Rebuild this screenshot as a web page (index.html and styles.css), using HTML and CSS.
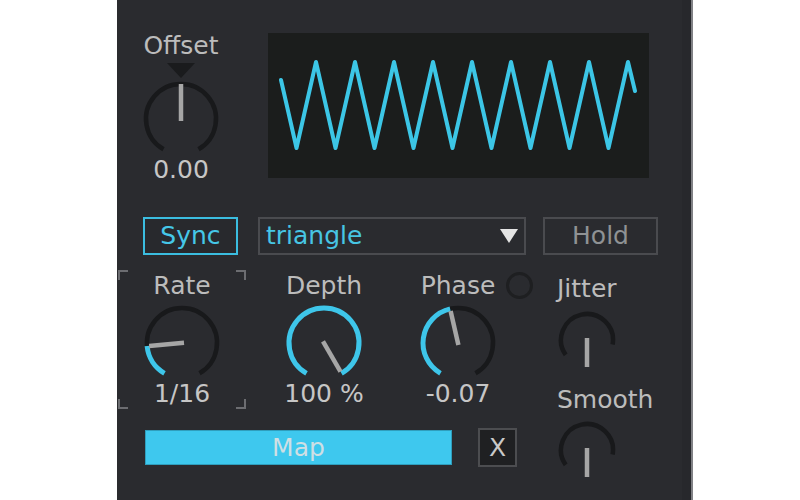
FILE: index.html
```html
<!DOCTYPE html>
<html>
<head>
<meta charset="utf-8">
<link rel="stylesheet" href="styles.css">
</head>
<body>
<div class="device">
  <div class="top">
    <div class="offset">
      <div class="label">Offset</div>
      <svg class="offset-knob" width="80" height="94" viewBox="0 0 80 94">
        <path class="track" d="M22.5 88.31 A35 35 0 1 1 57.5 88.31"/>
        <polygon class="marker" points="26,2 54,2 40,17"/>
        <line class="needle" x1="40" y1="60" x2="40" y2="23"/>
      </svg>
      <div class="value">0.00</div>
    </div>
    <div class="scope">
      <svg width="381" height="145" viewBox="0 0 381 145">
        <polyline class="wave" points="13,47 28.5,115 48,29 67.5,115 87,29 106.5,115 126,29 145.5,115 165,29 184.5,115 204,29 223.5,115 243,29 262.5,115 282,29 301.5,115 321,29 340.5,115 360,29 367,58"/>
      </svg>
    </div>
  </div>

  <div class="controls">
    <div class="btn sync">Sync</div>
    <div class="select">
      <span class="select-text">triangle</span>
      <svg class="arrow" width="18" height="14" viewBox="0 0 18 14"><polygon points="0,0 18,0 9,14"/></svg>
    </div>
    <div class="btn hold">Hold</div>
  </div>

  <div class="bottom">
    <div class="left">
      <div class="knobs">
        <div class="dial rate">
          <div class="label">Rate</div>
          <svg class="knob" width="80" height="80" viewBox="0 0 80 80">
            <path class="track" d="M22.5 70.31 A35 35 0 1 1 57.5 70.31"/>
            <path class="fill" d="M22.5 70.31 A35 35 0 0 1 5.13 43.05"/>
            <line class="needle" x1="42" y1="39.8" x2="7.1" y2="42.9"/>
          </svg>
          <div class="value">1/16</div>
        </div>
        <div class="dial depth">
          <div class="label">Depth</div>
          <svg class="knob" width="80" height="80" viewBox="0 0 80 80">
            <path class="fill" d="M22.5 70.31 A35 35 0 1 1 57.5 70.31"/>
            <line class="needle" x1="39" y1="38.3" x2="56.5" y2="68.6"/>
          </svg>
          <div class="value">100 %</div>
        </div>
        <div class="dial phase">
          <div class="label">Phase</div>
          <span class="led"></span>
          <svg class="knob" width="80" height="80" viewBox="0 0 80 80">
            <path class="track" d="M22.5 70.31 A35 35 0 1 1 57.5 70.31"/>
            <path class="fill" d="M22.5 70.31 A35 35 0 0 1 32.13 5.9"/>
            <line class="needle" x1="40.4" y1="42" x2="32.6" y2="7.9"/>
          </svg>
          <div class="value">-0.07</div>
        </div>
      </div>
      <div class="maprow">
        <div class="map">Map</div>
        <div class="xbtn">X</div>
      </div>
    </div>
    <div class="right">
      <div class="label">Jitter</div>
      <svg class="small-knob" width="60" height="60" viewBox="0 0 60 60">
        <path class="track" d="M8.7 44.9 A26 26 0 1 1 55.6 34.5"/>
        <line class="needle" x1="30" y1="28" x2="30" y2="57"/>
      </svg>
      <div class="label smooth-label">Smooth</div>
      <svg class="small-knob smooth-knob" width="60" height="60" viewBox="0 0 60 60">
        <path class="track" d="M8.7 44.9 A26 26 0 1 1 55.6 34.5"/>
        <line class="needle" x1="30" y1="28" x2="30" y2="57"/>
      </svg>
    </div>
  </div>
</div>
</body>
</html>
```

FILE: styles.css
```css
html, body {
  margin: 0;
  padding: 0;
  background: #ffffff;
}

body {
  font-family: "DejaVu Sans", "Liberation Sans", sans-serif;
}

.device {
  margin-left: 117px;
  width: 574px;
  height: 500px;
  background: #2a2b2f;
  border-right: 2px solid #808185;
  box-shadow: inset -9px 0 0 #27282c;
  display: flex;
  flex-direction: column;
  overflow: hidden;
}

.label,
.value {
  font-size: 25px;
  line-height: 28px;
  color: #bcbcbc;
  white-space: nowrap;
}

.value {
  color: #c6c6c6;
}

/* top: offset knob + scope */
.top {
  display: flex;
  padding-top: 32px;
}

.offset {
  width: 100px;
  margin-left: 14px;
  display: flex;
  flex-direction: column;
  align-items: center;
}

.offset-knob {
  display: block;
  margin-top: 1px;
}

.offset .value {
  margin-top: 1px;
}

.track {
  fill: none;
  stroke: #18191b;
  stroke-width: 4.5;
}

.fill {
  fill: none;
  stroke: #3ec6ea;
  stroke-width: 5;
}

.needle {
  stroke: #a6a6a6;
  stroke-width: 4.5;
}

.marker {
  fill: #1a1b1d;
}

.scope {
  margin-left: 37px;
  margin-top: 1px;
  width: 381px;
  height: 145px;
  background: #1b1d1c;
}

.scope svg {
  display: block;
}

.wave {
  fill: none;
  stroke: #3cc6e6;
  stroke-width: 4;
  stroke-linejoin: round;
  stroke-linecap: round;
}

/* controls row */
.controls {
  display: flex;
  margin-top: 33px;
  padding-left: 26px;
  height: 38px;
}

.btn,
.select {
  box-sizing: border-box;
  height: 38px;
  font-size: 25px;
  line-height: 34px;
  white-space: nowrap;
}

.btn {
  text-align: center;
}

.sync {
  width: 95px;
  border: 2px solid #3bbde0;
  color: #45c7e8;
  background: #28292d;
}

.select {
  width: 268px;
  margin-left: 20px;
  border: 2px solid #4a4b4f;
  padding: 0 6px;
  display: flex;
  align-items: center;
  justify-content: space-between;
}

.select-text {
  color: #47c5e4;
}

.arrow {
  display: block;
  fill: #e4e4e4;
}

.hold {
  width: 115px;
  margin-left: 17px;
  border: 2px solid #4a4b4f;
  color: #8f9294;
}

/* bottom area */
.bottom {
  display: flex;
}

.left {
  width: 440px;
  display: flex;
  flex-direction: column;
}

.knobs {
  display: flex;
  margin-top: 15px;
  padding-left: 1px;
}

.dial {
  position: relative;
  box-sizing: border-box;
  width: 100px;
  padding-top: 2px;
  display: flex;
  flex-direction: column;
  align-items: center;
}

.dial .knob {
  display: block;
  margin-top: 3px;
}

.dial .value {
  margin-top: -3px;
}

.rate {
  width: 128px;
  height: 139px;
  --c: #6c6d71;
  background:
    linear-gradient(var(--c), var(--c)) left top / 10px 2px no-repeat,
    linear-gradient(var(--c), var(--c)) left top / 2px 10px no-repeat,
    linear-gradient(var(--c), var(--c)) right top / 10px 2px no-repeat,
    linear-gradient(var(--c), var(--c)) right top / 2px 10px no-repeat,
    linear-gradient(var(--c), var(--c)) left bottom / 10px 2px no-repeat,
    linear-gradient(var(--c), var(--c)) left bottom / 2px 10px no-repeat,
    linear-gradient(var(--c), var(--c)) right bottom / 10px 2px no-repeat,
    linear-gradient(var(--c), var(--c)) right bottom / 2px 10px no-repeat;
}

.depth {
  margin-left: 28px;
}

.phase {
  margin-left: 34px;
}

.led {
  position: absolute;
  left: 98px;
  top: 2px;
  width: 27px;
  height: 27px;
  box-sizing: border-box;
  border: 3px solid #1e1f21;
  border-radius: 50%;
}

.maprow {
  display: flex;
  align-items: center;
  margin-top: 19px;
  padding-left: 28px;
}

.map {
  box-sizing: border-box;
  width: 307px;
  height: 35px;
  background: #3ec8ee;
  border: 1px solid #2f9ebd;
  color: #cfdfe4;
  font-size: 25px;
  line-height: 33px;
  text-align: center;
}

.xbtn {
  box-sizing: border-box;
  width: 39px;
  height: 39px;
  margin-left: 26px;
  background: #1f2022;
  border: 2px solid #4c4d50;
  color: #c9c9c9;
  font-size: 25px;
  line-height: 35px;
  text-align: center;
}

.right {
  display: flex;
  flex-direction: column;
  align-items: flex-start;
  padding-top: 20px;
}

.small-knob {
  display: block;
  margin-top: 7px;
}

.smooth-label {
  margin-top: 16px;
}

.small-knob.smooth-knob {
  margin-top: 6px;
}
```
